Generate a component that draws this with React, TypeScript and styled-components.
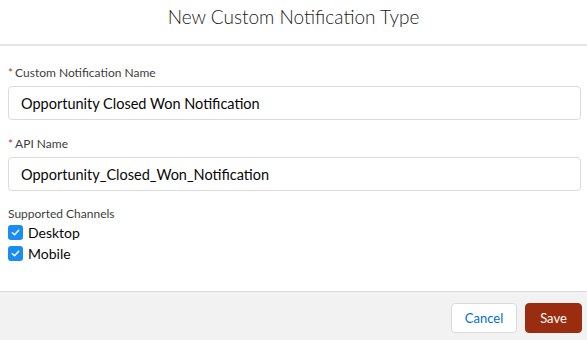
import styled, { createGlobalStyle } from "styled-components";

const GlobalStyle = createGlobalStyle`
  html, body {
    margin: 0;
    padding: 0;
    background: #ffffff;
  }
  body {
    font-family: Lato, "Open Sans", "Liberation Sans", sans-serif;
    color: #080707;
  }
`;

const channels = ["Desktop", "Mobile"];

export default function App() {
  return (
    <>
      <GlobalStyle />
      <Modal>
        <Header>
          <Title>New Custom Notification Type</Title>
        </Header>
        <Body>
          <Field>
            <Label>
              <Required>*</Required>Custom Notification Name
            </Label>
            <Input readOnly value="Opportunity Closed Won Notification" />
          </Field>
          <Field>
            <Label>
              <Required>*</Required>API Name
            </Label>
            <Input readOnly value="Opportunity_Closed_Won_Notification" />
          </Field>
          <Fieldset>
            <Legend>Supported Channels</Legend>
            {channels.map((channel) => (
              <CheckRow key={channel}>
                <CheckBox>
                  <svg width="9" height="9" viewBox="0 0 10 10">
                    <path
                      d="M1.5 5.2 L4 7.5 L8.5 2.5"
                      fill="none"
                      stroke="white"
                      strokeWidth="1.6"
                      strokeLinecap="round"
                      strokeLinejoin="round"
                    />
                  </svg>
                </CheckBox>
                <CheckLabel>{channel}</CheckLabel>
              </CheckRow>
            ))}
          </Fieldset>
        </Body>
        <Footer>
          <Button $width={66}>Cancel</Button>
          <Button $width={57} $brand>
            Save
          </Button>
        </Footer>
      </Modal>
    </>
  );
}

const Modal = styled.div`
  width: 587px;
  height: 340px;
  display: flex;
  flex-direction: column;
  background: #ffffff;
`;

const Header = styled.div`
  height: 44px;
  display: flex;
  align-items: center;
  justify-content: center;
  border-bottom: 2px solid #e5e5e5;
`;

const Title = styled.h2`
  margin: 0;
  font-size: 19px;
  font-weight: 300;
  color: #1a1a1a;
  padding-bottom: 12px;
`;

const Body = styled.div`
  flex: 1;
  display: flex;
  flex-direction: column;
  gap: 15px;
  padding: 18px 6px 0 8px;
`;

const Field = styled.div`
  display: flex;
  flex-direction: column;
  gap: 4px;
`;

const Label = styled.label`
  font-size: 12px;
  line-height: 18px;
  color: #3e3e3c;
`;

const Required = styled.span`
  color: #c23934;
  margin-right: 2px;
`;

const Input = styled.input`
  height: 34px;
  box-sizing: border-box;
  border: 1px solid #dddbda;
  border-radius: 4px;
  padding: 0 12px;
  font-family: Lato, "Open Sans", "Liberation Sans", sans-serif;
  font-size: 14.5px;
  color: #080707;
  background: #ffffff;
  outline: none;
`;

const Fieldset = styled.div`
  display: flex;
  flex-direction: column;
`;

const Legend = styled.div`
  font-size: 12px;
  line-height: 16px;
  color: #3e3e3c;
`;

const CheckRow = styled.div`
  height: 21px;
  display: flex;
  align-items: center;
  gap: 5px;
`;

const CheckBox = styled.span`
  width: 15px;
  height: 15px;
  border-radius: 3px;
  background: #1b8cf0;
  display: flex;
  align-items: center;
  justify-content: center;
`;

const CheckLabel = styled.span`
  font-size: 14px;
  color: #080707;
`;

const Footer = styled.div`
  height: 49px;
  box-sizing: border-box;
  padding: 4px 5px 0 0;
  border-top: 1px solid #dddbda;
  background: #f3f2f2;
  display: flex;
  align-items: center;
  justify-content: flex-end;
  gap: 8px;
`;

const Button = styled.button<{ $brand?: boolean; $width: number }>`
  width: ${(p) => p.$width}px;
  height: 30px;
  padding: 0;
  border-radius: 4px;
  font-family: Lato, "Open Sans", "Liberation Sans", sans-serif;
  font-size: 13px;
  border: 1px solid ${(p) => (p.$brand ? "#9a2c10" : "#dddbda")};
  background: ${(p) => (p.$brand ? "#9a2c10" : "#ffffff")};
  color: ${(p) => (p.$brand ? "#ffffff" : "#0070d2")};
`;
